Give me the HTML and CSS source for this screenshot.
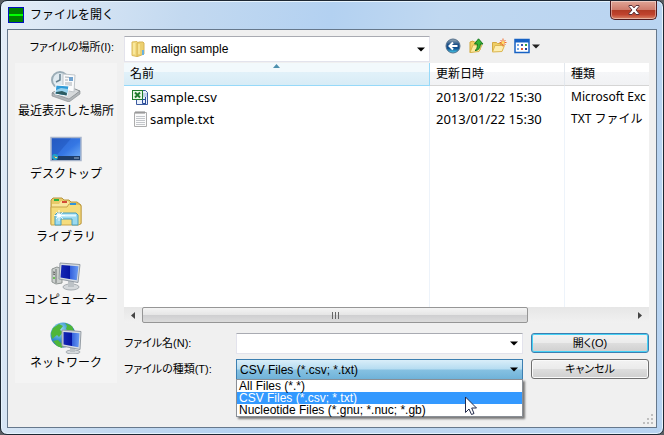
FILE: index.html
```html
<!DOCTYPE html>
<html lang="ja">
<head>
    <meta charset="UTF-8">
    <meta name="viewport" content="width=device-width, initial-scale=1.0">
    <title>ファイルを開く</title>
    <link rel="stylesheet" href="styles.css">
</head>
<body>
    <div class="window">
        <header class="titlebar">
            <svg class="app-icon" width="16" height="16" viewBox="0 0 16 16">
                <rect x=".5" y=".5" width="15" height="15" fill="#008200" stroke="#0010c0"/>
                <path d="M1 8h14" stroke="#00ff00" stroke-width="2"/>
            </svg>
            <h1 class="title">ファイルを開く</h1>
            <button class="close" aria-label="閉じる">
                <svg width="12" height="10" viewBox="0 0 12 10">
                    <path d="M1 .5h3l2 2.400L8 .5h3v1L8 5l3 3.500v1H8L6 7.100 4 9.500H1v-1L4 5 1 1.500z" fill="#fff" stroke="#5a3238"/>
                </svg>
            </button>
        </header>

        <main class="dialog">
            <!-- Location row -->
            <label class="location-label" for="location">ファイルの場所(I):</label>
            <div class="location">
                <div class="combo location-combo">
                    <svg class="combo-icon" width="14" height="16" viewBox="0 0 14 16">
                        <path d="M1 1l5-.5 1 1v13l-1 1-5-1z" fill="#f3dc82" stroke="#d9b95c"/>
                        <path d="M6 2l2-1h4l1 1v11l-5 2-2 .5z" fill="#ecd06f" stroke="#d6b456"/>
                        <path d="M3 2v11M8 3v10" stroke="#fff3b8"/>
                        <path d="M11 9h2v5h-2z" fill="#6bb1dd"/>
                    </svg>
                    <select id="location">
                        <option>malign sample</option>
                    </select>
                    <svg class="arrow" width="8" height="5" viewBox="0 0 8 5"><path d="M0 .5h8l-4 4z"/></svg>
                </div>
                <div class="toolbar">
                    <button aria-label="戻る">
                        <svg width="16" height="16" viewBox="0 0 16 16">
                            <defs>
                                <linearGradient id="ball" x1="0" y1="0" x2="0" y2="1">
                                    <stop offset="0" stop-color="#9dadb8"/>
                                    <stop offset=".4" stop-color="#1d5087"/>
                                    <stop offset=".65" stop-color="#0f4c8c"/>
                                    <stop offset="1" stop-color="#49d0ee"/>
                                </linearGradient>
                            </defs>
                            <circle cx="8" cy="8" r="7" fill="url(#ball)" stroke="#536f8b"/>
                            <path d="M12.500 8H5M8 4.500L4.500 8 8 11.500" fill="none" stroke="#fff" stroke-width="2"/>
                        </svg>
                    </button>
                    <button aria-label="上へ">
                        <svg width="16" height="16" viewBox="0 0 16 16">
                            <path d="M2 14.500V4l3-1 1 1h6v8z" fill="#f0cf63" stroke="#cfa63c"/>
                            <path d="M2 14.500L5 7h9l-3 6.500z" fill="#fdeaa0" stroke="#d8b44e"/>
                            <path d="M7 12.500c2-1 2.500-3 2.300-6.500H6.500L10.500.8 15 6h-2.700c0 4-1.800 6.500-5.300 6.500z" fill="#36b537" stroke="#16761c"/>
                        </svg>
                    </button>
                    <button aria-label="新しいフォルダー">
                        <svg width="16" height="16" viewBox="0 0 16 16">
                            <path d="M1.500 13.500v-9h4l1 1h5v7z" fill="#efce65" stroke="#d3aa43"/>
                            <path d="M1.500 14L4 7.500h9.500L11 13.500z" fill="#fdeeb0" stroke="#dcb854"/>
                            <path d="M12 .5v8M8.500 4.500h7M9.500 2l5 5M14.500 2l-5 5" stroke="#f16b2b"/>
                            <circle cx="12" cy="4.500" r="1.500" fill="#ffe26a"/>
                        </svg>
                    </button>
                    <button class="views" aria-label="表示">
                        <svg width="16" height="16" viewBox="0 0 16 16">
                            <rect x="1" y="1.500" width="14" height="13" fill="#fff" stroke="#1762c4" stroke-width="1.500"/>
                            <path d="M1 3h14" stroke="#1762c4" stroke-width="3"/>
                            <path d="M3 7h2M3 11h2" stroke="#77a7e4" stroke-width="2"/>
                            <path d="M7 7h2" stroke="#3b53ae" stroke-width="2"/>
                            <path d="M11 7h2" stroke="#33a33c" stroke-width="2"/>
                            <path d="M7 11h2" stroke="#e0562c" stroke-width="2"/>
                            <path d="M11 11h2" stroke="#243c94" stroke-width="2"/>
                        </svg>
                        <svg width="8" height="5" viewBox="0 0 8 5"><path d="M0 .5h8l-4 4z" fill="#222"/></svg>
                    </button>
                </div>
            </div>

            <!-- Places bar -->
            <nav class="places">
                <a href="#recent">
                    <svg width="32" height="32" viewBox="0 0 32 32">
                        <path d="M2 23l13-8 15 6-11 9z" fill="#d7dadc" stroke="#8b9093"/>
                        <path d="M2 23v3l17 6 11-8v-3l-11 8z" fill="#b1b6b9" stroke="#858a8e" stroke-width=".6"/>
                        <circle cx="10" cy="10" r="8" fill="#e0eaf0" stroke="#9badb7" stroke-width="2"/>
                        <path d="M10 4v6l-4 2" fill="none" stroke="#65808e" stroke-width="1.500"/>
                        <path d="M13 4l12 1-1 17-11-2z" fill="#fafbfc" stroke="#bfc5c9"/>
                        <path d="M15 7l4 .3M15 10h3M15 13h7M15 15h7" stroke="#a6adb3"/>
                        <path d="M19 7h4v4h-4z" fill="#72a3cf"/>
                        <path d="M6 15l13 1-2 10-12-2z" fill="#2f9bd8" stroke="#fff"/>
                        <path d="M6 20l5-2 7 1-1 6-11-2z" fill="#96d1ec"/>
                        <path d="M6 22l6-1 5 2-.5 2.500-11-2z" fill="#2c5c62"/>
                    </svg>
                    <span>最近表示した場所</span>
                </a>
                <a href="#desktop">
                    <svg width="32" height="32" viewBox="0 0 32 32">
                        <defs>
                            <linearGradient id="desk" x1="0" y1="0" x2="1" y2="1">
                                <stop offset="0" stop-color="#2c62cc"/>
                                <stop offset=".55" stop-color="#3577e4"/>
                                <stop offset="1" stop-color="#77b6fa"/>
                            </linearGradient>
                        </defs>
                        <rect x="1" y="4.500" width="30" height="23" fill="url(#desk)" stroke="#a7b4cb" stroke-width="1.500"/>
                        <path d="M2 5.500h19L6 23H2z" fill="#1747ac" opacity=".35"/>
                        <path d="M2 23h28v4H2z" fill="#1e3e69"/>
                        <path d="M24 25h5" stroke="#9db5cd"/>
                        <circle cx="5" cy="24" r="3" fill="#24a2c8"/>
                        <path d="M4 23h1v1H4z" fill="#f26c32"/>
                        <path d="M5 24h2v1H5z" fill="#ffe46e"/>
                    </svg>
                    <span>デスクトップ</span>
                </a>
                <a href="#library">
                    <svg width="32" height="32" viewBox="0 0 32 32">
                        <path d="M1 28V4l2-2h9l2 2h5l2 2h6l4 3v19z" fill="#e9ca68" stroke="#b8953e"/>
                        <path d="M2 8h7l2-3h7l2 3v19H2z" fill="#f8e59d"/>
                        <path d="M1 29V11h16l2-3h10l2 2v17l-2 2z" fill="#f5dc7c" stroke="#c8a54a"/>
                        <path d="M4 3h5v2H4z" fill="#29b43f"/>
                        <path d="M12 5h5v2h-5z" fill="#d34a35"/>
                        <path d="M20 7h6v2h-6z" fill="#2f94dc"/>
                        <path d="M5 29V19l2-2h19l2 2v10h-6v-6H11v6z" fill="#9bdaef" stroke="#499ebf"/>
                        <path d="M7 19.500h19" stroke="#e1f8ff" stroke-width="2"/>
                        <path d="M9 14v11M4 19.500h11M6 16l7 7M13 16l-7 7" stroke="#fff" stroke-width=".8"/>
                        <circle cx="9" cy="19.500" r="2" fill="#fff"/>
                    </svg>
                    <span>ライブラリ</span>
                </a>
                <a href="#computer">
                    <svg width="32" height="32" viewBox="0 0 32 32">
                        <defs>
                            <linearGradient id="screen" x1="0" y1="0" x2="1" y2="0">
                                <stop offset="0" stop-color="#1527b4"/>
                                <stop offset=".5" stop-color="#0616a4"/>
                                <stop offset=".55" stop-color="#3562dd"/>
                                <stop offset="1" stop-color="#6b9df3"/>
                            </linearGradient>
                        </defs>
                        <path d="M2 10l5-2 5 2v14l-6 1-4-2z" fill="#cbcfcd" stroke="#8e9492"/>
                        <path d="M6 10v14" stroke="#6f7573"/>
                        <path d="M3 13l2 .4M3 15l2 .4" stroke="#555"/>
                        <circle cx="4" cy="19" r="1" fill="#4bbb31"/>
                        <ellipse cx="21" cy="28" rx="8" ry="3" fill="#d5d9dc" stroke="#a5abb0"/>
                        <path d="M18 22h6v6h-6z" fill="#bcc2c6"/>
                        <path d="M10 4l20 1.500-2 18L9 20z" fill="#d6dce1" stroke="#949ca4"/>
                        <path d="M11.500 6l17 1.300-1.700 14L10.500 18.500z" fill="url(#screen)"/>
                    </svg>
                    <span>コンピューター</span>
                </a>
                <a href="#network">
                    <svg width="32" height="32" viewBox="0 0 32 32">
                        <defs>
                            <radialGradient id="globe" cx=".35" cy=".3" r=".8">
                                <stop offset="0" stop-color="#a9e8fa"/>
                                <stop offset=".5" stop-color="#3993cf"/>
                                <stop offset="1" stop-color="#144f95"/>
                            </radialGradient>
                        </defs>
                        <circle cx="13" cy="13" r="12.500" fill="url(#globe)"/>
                        <path d="M3 6l6-4 4 2-3 4 3 2-4 5-2-2-5 4-1-6zM15 1l7 3 2 5-5 1-3-3 1-3zM3 19l5-1 5 5-1 3-5-2z" fill="#4fb63a"/>
                        <ellipse cx="23" cy="30" rx="7" ry="2" fill="#d5d9dc" stroke="#a5abb0"/>
                        <path d="M20 25h5v5h-5z" fill="#bcc2c6"/>
                        <path d="M12 8l19 1.500-1 18L12 24z" fill="#d6dce1" stroke="#949ca4"/>
                        <path d="M13.500 10l16 1.300-1 14-15-2.800z" fill="url(#screen)"/>
                    </svg>
                    <span>ネットワーク</span>
                </a>
            </nav>

            <div class="content">
                <div class="file-list">
                    <table>
                        <thead>
                            <tr>
                                <th class="col-name sorted">名前
                                    <svg class="sort" width="7" height="4" viewBox="0 0 7 4"><path d="M0 4L3.500 0 7 4z" fill="#4d90ae"/></svg>
                                </th>
                                <th class="col-date">更新日時</th>
                                <th>種類</th>
                            </tr>
                        </thead>
                        <tbody>
                            <tr>
                                <td>
                                    <div class="file">
                                        <svg width="16" height="16" viewBox="0 0 16 16">
                                            <path d="M4.500 1.500h9l2 2v12h-11z" fill="#eaf1fc" stroke="#3c5ba0"/>
                                            <path d="M11 5h4M11 7h4" stroke="#9bb2da"/>
                                            <rect x=".5" y="1.500" width="10" height="9" fill="#e9f6e5" stroke="#1f7a2c"/>
                                            <path d="M3 3.500l5 5M8 3.500l-5 5" stroke="#1f7a2c" stroke-width="2"/>
                                            <path d="M10.500 14.500v-4h3v4h-3M13.500 8v7" fill="none" stroke="#294b99"/>
                                        </svg>
                                        <span>sample.csv</span>
                                    </div>
                                </td>
                                <td>2013/01/22 15:30</td>
                                <td>Microsoft Exc</td>
                            </tr>
                            <tr>
                                <td>
                                    <div class="file">
                                        <svg width="16" height="16" viewBox="0 0 16 16">
                                            <path d="M2.500 1.500h12v14h-12z" fill="#fbfbfb" stroke="#acacac"/>
                                            <path d="M4 0v3M6 0v3M8 0v3M10 0v3M12 0v3" stroke="#888"/>
                                            <path d="M4 5.500h9M4 7.500h9M4 9.500h9M4 11.500h9M4 13.500h9" stroke="#c3c6ca"/>
                                        </svg>
                                        <span>sample.txt</span>
                                    </div>
                                </td>
                                <td>2013/01/22 15:30</td>
                                <td>TXT ファイル</td>
                            </tr>
                            <!-- Carries the column lines down to the scroll bar -->
                            <tr class="filler"><td></td><td></td><td></td></tr>
                        </tbody>
                    </table>
                </div>
                <div class="scrollbar">
                    <button aria-label="左へ"><svg width="4" height="7" viewBox="0 0 4 7"><path d="M4 0v7L0 3.500z" fill="#444"/></svg></button>
                    <div class="track">
                        <div class="thumb"><i></i><i></i><i></i></div>
                    </div>
                    <button aria-label="右へ"><svg width="4" height="7" viewBox="0 0 4 7"><path d="M0 0v7l4-3.500z" fill="#444"/></svg></button>
                </div>

                <form class="fields">
                    <label for="filename">ファイル名(N):</label>
                    <div class="combo">
                        <input type="text" id="filename">
                        <svg class="arrow" width="8" height="5" viewBox="0 0 8 5"><path d="M0 .5h8l-4 4z"/></svg>
                    </div>
                    <button type="button" class="btn default">開く(O)</button>

                    <label for="filetype">ファイルの種類(T):</label>
                    <div class="combo open">
                        <select id="filetype">
                            <option>All Files (*.*)</option>
                            <option selected>CSV Files (*.csv; *.txt)</option>
                            <option>Nucleotide Files (*.gnu; *.nuc; *.gb)</option>
                        </select>
                        <svg class="arrow" width="8" height="5" viewBox="0 0 8 5"><path d="M0 .5h8l-4 4z"/></svg>
                        <ul class="menu" role="listbox">
                            <li role="option">All Files (*.*)</li>
                            <li role="option" class="active" aria-selected="true">CSV Files (*.csv; *.txt)</li>
                            <li role="option">Nucleotide Files (*.gnu; *.nuc; *.gb)</li>
                        </ul>
                        <svg class="pointer" width="12" height="19" viewBox="0 0 12 19">
                            <path d="M.5 1v15.500L4 13l2.500 5.500 2.500-1L6.700 12h4.800z" fill="#fff" stroke="#222a4a"/>
                        </svg>
                    </div>
                    <button type="button" class="btn">キャンセル</button>
                </form>
            </div>

            <svg class="grip" width="11" height="11" viewBox="0 0 11 11">
                <path d="M8 0h2v2H8zM8 4h2v2H8zM4 4h2v2H4zM8 8h2v2H8zM4 8h2v2H4zM0 8h2v2H0z" fill="#bfbfbf"/>
            </svg>
        </main>
    </div>
</body>
</html>
```

FILE: styles.css
```css
* {
    box-sizing: border-box;
}

body {
    margin: 0;
    background-color: #5a5e63;
    color: #000;
    font-family: "Liberation Sans", "Noto Sans CJK JP", sans-serif;
    font-size: 12px;
    line-height: 18px;
}

button,
input,
select {
    font: inherit;
    color: inherit;
}

svg {
    display: block;
    flex: none;
}

/* Window frame */
.window {
    display: flex;
    flex-direction: column;
    min-height: 100vh;
    padding: 0 6px 6px;
    border: 1px solid #1d2733;
    border-radius: 7px;
    background: linear-gradient(100deg, #e4edf7 0, #c3d9f0 25%, #b3d1f1 45%, #c0d8f1 60%, #b7d3f1 100%);
    box-shadow: inset 0 0 0 1px #e6f3fd;
}

.titlebar {
    display: flex;
    align-items: center;
    height: 28px;
    padding-left: 1px;
}

.title {
    flex: 1;
    margin: 0 0 0 6px;
    font-size: 12px;
    font-weight: normal;
}

.close {
    display: flex;
    align-items: center;
    justify-content: center;
    align-self: flex-start;
    width: 47px;
    height: 19px;
    padding: 0;
    border: 1px solid #4e1b1f;
    border-top: none;
    border-radius: 0 0 5px 5px;
    background: linear-gradient(#e0a596 0, #cf7c6c 48%, #b03a24 50%, #c0432e 75%, #d98467 100%);
    box-shadow: inset 0 0 0 1px rgba(255, 255, 255, 0.4);
}

.dialog {
    position: relative;
    flex: 1;
    display: grid;
    grid-template-columns: 102px minmax(0, 1fr);
    grid-template-rows: 27px 1fr;
    column-gap: 7px;
    padding: 6px 7px 0;
    border: 1px solid #66788c;
    background-color: #f0f0f0;
}

/* Location row */
.location-label {
    padding: 2px 3px 0 0;
    font-size: 11px;
    text-align: right;
    white-space: nowrap;
    font-feature-settings: "palt";
}

.location {
    display: flex;
    align-items: flex-start;
}

.combo {
    position: relative;
    display: flex;
    align-items: center;
    height: 21px;
    border: 1px solid #e3e3ec;
    border-top-color: #a9abb2;
    background-color: #fff;
}

.combo select,
.combo input {
    appearance: none;
    flex: 1;
    min-width: 0;
    height: 100%;
    padding: 0 20px 0 3px;
    border: none;
    border-radius: 0;
    outline: none;
    background: none;
}

.combo .arrow {
    position: absolute;
    right: 4px;
    pointer-events: none;
}

.location-combo {
    width: 306px;
    height: 26px;
}

.combo-icon {
    margin: 0 3px 0 6px;
}

.toolbar {
    display: flex;
    align-items: center;
    gap: 7px;
    height: 20px;
    margin-left: 15px;
}

.toolbar button {
    padding: 0;
    border: none;
    background: none;
}

.toolbar .views {
    display: flex;
    align-items: center;
    gap: 2px;
}

/* Places bar */
.places {
    display: flex;
    flex-direction: column;
    align-self: start;
    gap: 13px;
    padding: 7px 0 11px;
    background-color: #f4f4f4;
}

.places a {
    display: flex;
    flex-direction: column;
    align-items: center;
    color: #000;
    text-decoration: none;
    white-space: nowrap;
}

/* File list */
.content {
    display: flex;
    flex-direction: column;
    min-width: 0;
    padding-bottom: 47px;
}

.file-list {
    flex: 1;
    display: flex;
    overflow: hidden;
    background-color: #fff;
    font-family: "Noto Sans", "Noto Sans CJK JP", sans-serif;
}

.file-list table {
    width: 100%;
    table-layout: fixed;
    border-collapse: separate;
    border-spacing: 0;
}

.file-list th {
    position: relative;
    height: 23px;
    padding: 0 6px;
    border-right: 1px solid #e3e8ee;
    border-bottom: 1px solid #d5d5d5;
    background: linear-gradient(#fff 40%, #f5f6f8 42%, #f1f2f4);
    font-weight: normal;
    text-align: left;
}

.file-list th.sorted {
    border-color: #96d9f9;
    background: linear-gradient(#f2f9fc 40%, #e1f1f9 42%, #d8ecf6);
}

.file-list td {
    height: 22px;
    padding: 0 0 0 6px;
    border-right: 1px solid #edf3fa;
    font-size: 13px;
    white-space: nowrap;
}

.file-list th:last-child,
.file-list td:last-child {
    border-right: none;
}

.file-list td:last-child {
    font-size: 12px;
}

.file-list .filler td {
    height: auto;
}

.col-name {
    width: 306px;
}

.col-date {
    width: 135px;
}

.sort {
    position: absolute;
    top: 1px;
    left: 49%;
}

.file {
    display: flex;
    align-items: center;
    gap: 2px;
    padding-left: 2px;
}

.scrollbar {
    display: flex;
    height: 16px;
    margin-bottom: 10px;
    background: linear-gradient(#e6e6e6, #f1f1f1);
}

.scrollbar button {
    display: flex;
    align-items: center;
    justify-content: center;
    width: 18px;
    padding: 0;
    border: none;
    background: none;
}

.track {
    flex: 1;
    display: flex;
}

.thumb {
    display: flex;
    align-items: center;
    justify-content: center;
    gap: 2px;
    width: 79%;
    border: 1px solid #969696;
    border-radius: 2px;
    background: linear-gradient(#f4f4f4 0, #e6e6e6 48%, #cfcfd1 52%, #dcdcdc 100%);
}

.thumb i {
    width: 1px;
    height: 7px;
    background-color: #666;
}

/* File name and type */
.fields {
    display: grid;
    grid-template-columns: 104px minmax(0, 1fr) 118px;
    gap: 5px 8px;
    align-items: start;
}

.fields label {
    padding-top: 1px;
    font-size: 11px;
    white-space: nowrap;
    font-feature-settings: "palt";
}

.combo.open {
    border: 1px solid #3c7fb1;
    background: linear-gradient(#d9eef9 0, #b5dcf1 48%, #86c1e2 52%, #70b3d9 100%);
}

.menu {
    position: absolute;
    top: 19px;
    left: -1px;
    right: -1px;
    margin: 0;
    padding: 0;
    border: 1px solid #8a8f96;
    background-color: #fff;
    box-shadow: 2px 2px 2px rgba(0, 0, 0, 0.5);
    line-height: 12px;
    list-style: none;
}

.menu li {
    padding-left: 2px;
    white-space: nowrap;
}

.menu .active {
    background-color: #3399ff;
    color: #fff;
}

.pointer {
    position: absolute;
    top: 36px;
    right: 45px;
}

.btn {
    height: 20px;
    padding: 0;
    border: 1px solid #707070;
    border-radius: 3px;
    background: linear-gradient(#f3f3f3 0, #ebebeb 48%, #dddddd 52%, #cfcfcf 100%);
    box-shadow: inset 0 0 0 1px #fafafa;
    font-size: 11px;
    line-height: 16px;
    font-feature-settings: "palt";
}

.btn.default {
    border-color: #3c7fb1;
    box-shadow: inset 0 0 0 1px #47d1f5;
}

.grip {
    position: absolute;
    right: 2px;
    bottom: 2px;
}
```
